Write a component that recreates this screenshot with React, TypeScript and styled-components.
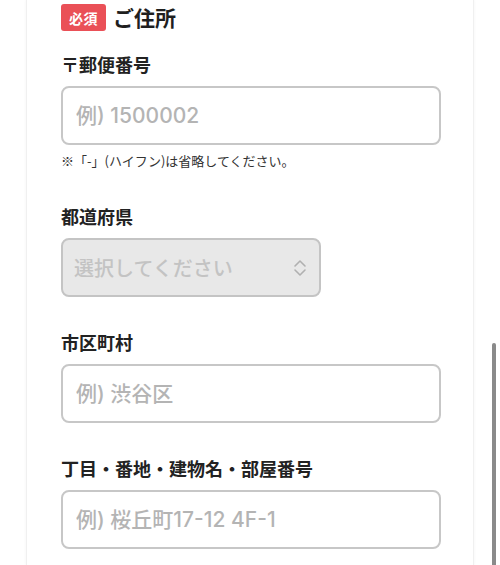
import React from "react";
import styled, { createGlobalStyle } from "styled-components";

const GlobalStyle = createGlobalStyle`
  html, body {
    margin: 0;
    padding: 0;
    background: #ffffff;
    overflow: hidden;
  }
  body {
    font-family: "Noto Sans CJK JP", "Noto Sans", sans-serif;
    color: #222222;
  }
`;

const Page = styled.div`
  height: 565px;
  background: #ffffff;
  position: relative;
`;

const Card = styled.section`
  box-sizing: border-box;
  margin: 0 26px;
  height: 100%;
  padding: 4px 34px 0;
  background: #ffffff;
  border-left: 1px solid #f0f0f0;
  border-right: 1px solid #f0f0f0;
  box-shadow: 0 0 3px rgba(0, 0, 0, 0.05);
`;

const Heading = styled.div`
  display: flex;
  align-items: center;
  gap: 7px;
  height: 27px;
`;

const Badge = styled.span`
  display: flex;
  align-items: center;
  justify-content: center;
  width: 45px;
  height: 27px;
  border-radius: 3px;
  background: #ea5057;
  color: #ffffff;
  font-size: 14px;
  font-weight: 700;
  letter-spacing: 0.5px;
`;

const Title = styled.h2`
  margin: 0;
  font-size: 21px;
  font-weight: 700;
  line-height: 27px;
  color: #1f1f1f;
`;

const Fields = styled.div`
  display: flex;
  flex-direction: column;
  gap: 32px;
  margin-top: 20px;
`;

const Field = styled.div`
  display: flex;
  flex-direction: column;
`;

const Label = styled.label`
  font-size: 18px;
  font-weight: 700;
  line-height: 26px;
  margin-bottom: 9px;
  color: #222222;
`;

const TextInput = styled.input`
  box-sizing: border-box;
  width: 380px;
  height: 59px;
  padding: 0 13px;
  border: 2px solid #c7c7c7;
  border-radius: 8px;
  background: #ffffff;
  font-family: "Inter", "Noto Sans CJK JP", sans-serif;
  font-size: 21px;
  font-weight: 500;
  color: #222222;
  outline: none;

  &::placeholder {
    color: #b4b4b4;
  }
`;

const SelectBox = styled.div`
  box-sizing: border-box;
  width: 260px;
  height: 59px;
  padding: 0 11px;
  display: flex;
  align-items: center;
  justify-content: space-between;
  border: 2px solid #c4c4c4;
  border-radius: 8px;
  background: #e8e8e8;
`;

const SelectText = styled.span`
  font-size: 20px;
  font-weight: 500;
  color: #c3c3c3;
`;

const Note = styled.p`
  margin: 6px 0 0;
  font-size: 13px;
  line-height: 20px;
  color: #333333;
`;

const ScrollThumb = styled.div`
  position: absolute;
  right: 4px;
  top: 343px;
  bottom: -4px;
  width: 4px;
  border-radius: 2px;
  background: #8a8a8a;
`;

const Chevrons = () => (
  <svg width="16" height="20" viewBox="0 0 16 20" fill="none">
    <path
      d="M3 8 L8 3 L13 8 M3 12 L8 17 L13 12"
      stroke="#b0b0b0"
      strokeWidth="1.6"
      strokeLinecap="round"
      strokeLinejoin="round"
    />
  </svg>
);

export default function App() {
  return (
    <Page>
      <GlobalStyle />
      <Card>
        <Heading>
          <Badge>必須</Badge>
          <Title>ご住所</Title>
        </Heading>
        <Fields>
          <Field>
            <Label>〒郵便番号</Label>
            <TextInput placeholder="例) 1500002" />
            <Note>※「-」(ハイフン)は省略してください。</Note>
          </Field>
          <Field>
            <Label>都道府県</Label>
            <SelectBox>
              <SelectText>選択してください</SelectText>
              <Chevrons />
            </SelectBox>
          </Field>
          <Field>
            <Label>市区町村</Label>
            <TextInput placeholder="例) 渋谷区" />
          </Field>
          <Field>
            <Label>丁目・番地・建物名・部屋番号</Label>
            <TextInput placeholder="例) 桜丘町17-12 4F-1" />
          </Field>
        </Fields>
      </Card>
      <ScrollThumb />
    </Page>
  );
}
